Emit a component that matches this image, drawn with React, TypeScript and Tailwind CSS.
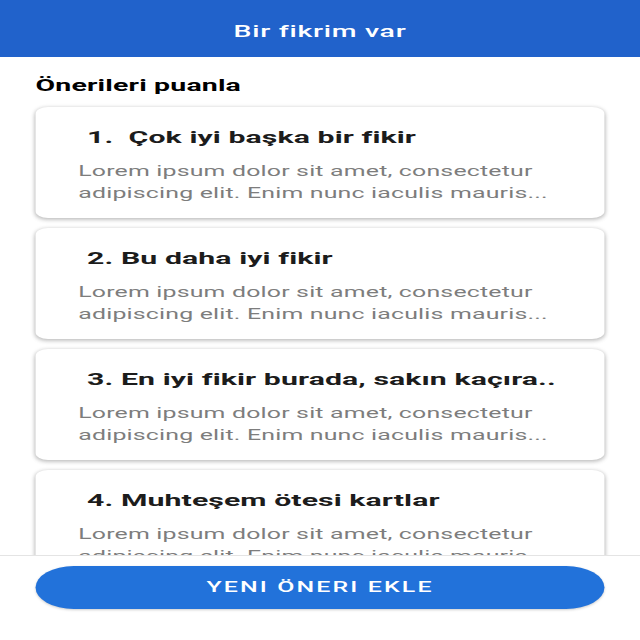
import React from "react";

const ideas = [
  "1.\u00a0 Çok iyi başka bir fikir",
  "2. Bu daha iyi fikir",
  "3. En iyi fikir burada, sakın kaçıra..",
  "4. Muhteşem ötesi kartlar",
];

function Card({ title }: { title: string }) {
  return (
    <div className="mx-[20px] mb-[10px] h-[111px] shrink-0 rounded-[7px] bg-white shadow-[0_1px_3px_rgba(0,0,0,0.25),0_2px_4px_rgba(0,0,0,0.08)]">
      <div className="pl-[29px] pt-[18px] text-[17px] font-bold leading-[24px] text-[#1c1c1c] whitespace-nowrap tracking-[0.05px]">
        {title}
      </div>
      <div className="mt-[11px] pl-[24px] text-[14px] leading-[22px] text-[#7d7d7d] whitespace-nowrap tracking-[0.1px]">
        <div>Lorem ipsum dolor sit amet, consectetur</div>
        <div>adipiscing elit. Enim nunc iaculis mauris...</div>
      </div>
    </div>
  );
}

export default function App() {
  return (
    <div className="w-[640px] h-[640px] overflow-hidden bg-white">
      <div
        className="w-[360px] h-[640px] flex flex-col origin-left scale-x-[1.7778] bg-white"
        style={{ fontFamily: "Roboto, 'Noto Sans', sans-serif" }}
      >
        <header className="h-[57px] shrink-0 bg-[#2162cb] flex items-center justify-center pt-[6px]">
          <span className="text-white text-[16px] font-medium tracking-[0.4px]">Bir fikrim var</span>
        </header>
        <main className="flex-1 overflow-hidden flex flex-col">
          <h2 className="mt-[17px] mb-[9px] pl-[20px] text-[16px] leading-[24px] font-bold text-black tracking-[0.1px]">
            Önerileri puanla
          </h2>
          {ideas.map((t) => (
            <Card key={t} title={t} />
          ))}
        </main>
        <footer className="h-[85px] shrink-0 border-t border-[#e4e4e4] bg-white px-[20px] pt-[10px]">
          <button className="w-full h-[43px] rounded-full bg-[#2272da] text-white text-[14px] font-medium tracking-[1.2px] uppercase shadow-[0_1px_2px_rgba(0,0,0,0.2)]">
            YENI ÖNERI EKLE
          </button>
        </footer>
      </div>
    </div>
  );
}
